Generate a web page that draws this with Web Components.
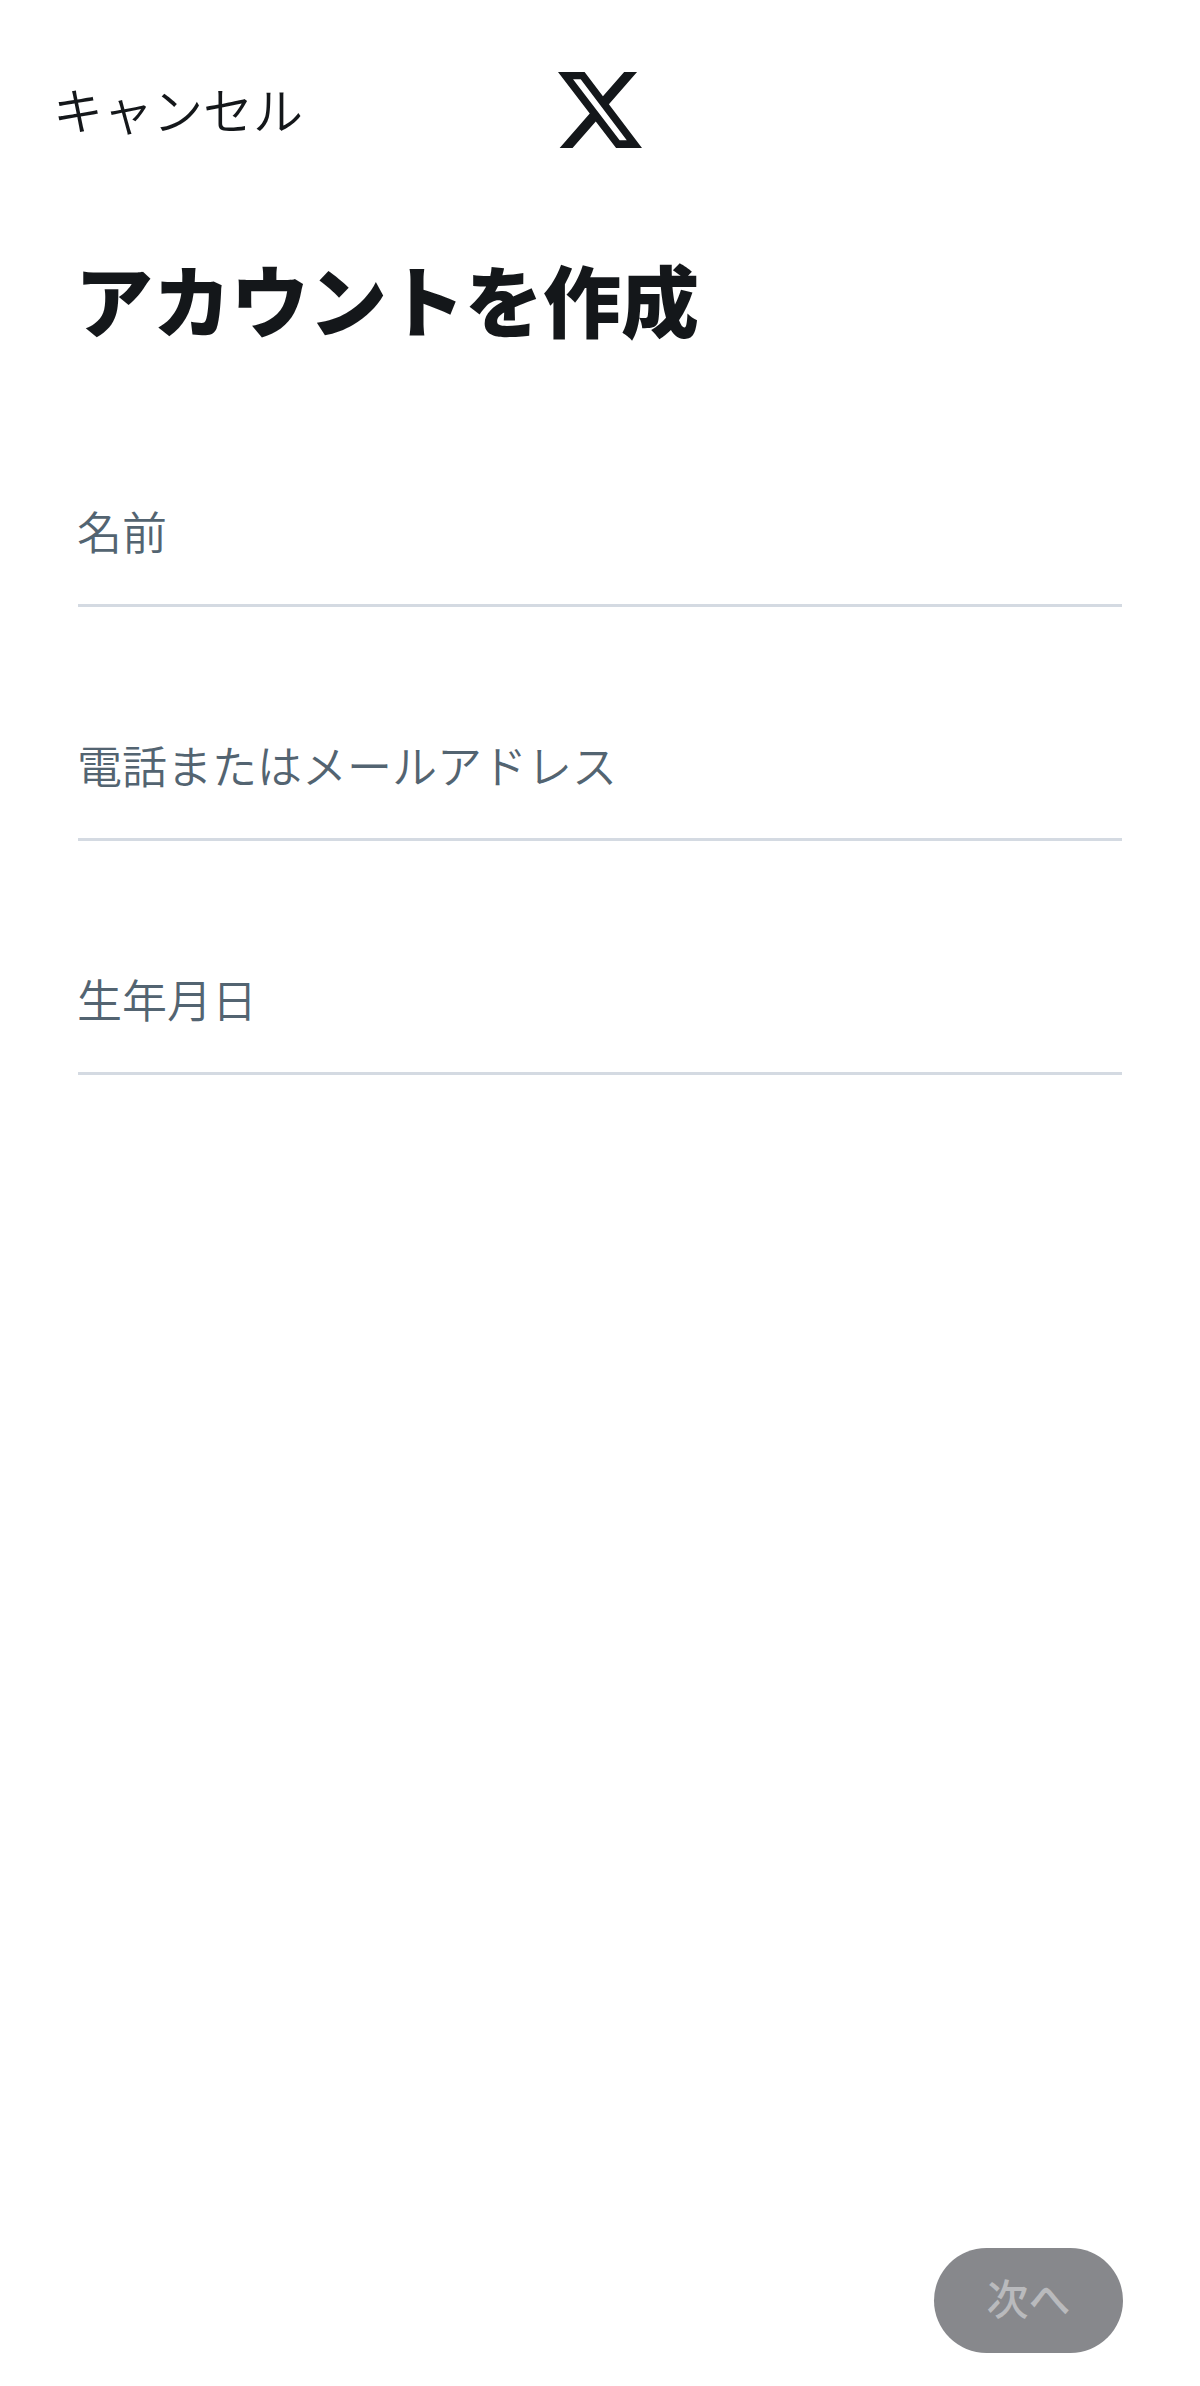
<!DOCTYPE html>
<html lang="ja">
<head>
<meta charset="utf-8">
<title>アカウントを作成</title>
<style>
  html, body { margin: 0; background: #fff; }
  body { font-family: "Noto Sans CJK JP", "Liberation Sans", sans-serif; }
</style>
</head>
<body>
<signup-page>
  <signup-topbar slot="top">キャンセル</signup-topbar>
  <h1 slot="title">アカウントを作成</h1>
  <signup-field>名前</signup-field>
  <signup-field>電話またはメールアドレス</signup-field>
  <signup-field>生年月日</signup-field>
  <next-button slot="action">次へ</next-button>
</signup-page>
<script>
class SignupPage extends HTMLElement {
    constructor() {
        super();
        this.attachShadow({mode: 'open'});
        this.shadowRoot.innerHTML = `
      <style>
    :host {
        display: flex;
        flex-direction: column;
        height: 2386px;
        box-sizing: border-box;
        padding-bottom: 33px;
        overflow: hidden;
    }
    .title {
        padding: 96px 78px 0 75px;
    }
    ::slotted(h1) {
        margin: 0;
        font-size: 78px;
        line-height: 100px;
        font-weight: 900;
        color: #14171a;
    }
    .fields {
        display: flex;
        flex-direction: column;
        padding: 25px 78px 0;
    }
    .action {
        margin-top: auto;
        display: flex;
        justify-content: flex-end;
        padding-right: 77px;
    }
      </style>
      <slot name="top"></slot>
      <div class="title"><slot name="title"></slot></div>
      <div class="fields"><slot></slot></div>
      <div class="action"><slot name="action"></slot></div>
  `;
    }
}

class SignupTopbar extends HTMLElement {
    constructor() {
        super();
        this.attachShadow({mode: 'open'});
        this.shadowRoot.innerHTML = `
      <style>
    :host {
        display: grid;
        grid-template-columns: 1fr auto 1fr;
        grid-template-rows: 80px;
        align-items: center;
        height: 152px;
        padding: 70px 53px 0;
        box-sizing: border-box;
        color: #14171a;
        font-size: 50px;
        font-weight: 350;
    }
    svg {
        display: block;
        width: 84px;
        height: 76px;
        fill: #14171a;
    }
    .cancel {
        align-self: start;
        line-height: 76px;
    }
      </style>
      <div class="cancel"><slot></slot></div>
      <svg viewBox="1.254 2.25 21.573 19.5" preserveAspectRatio="none"><path d="M18.244 2.25h3.308l-7.227 8.26 8.502 11.24H16.17l-5.214-6.817L4.99 21.75H1.68l7.73-8.835L1.254 2.25H8.08l4.713 6.231zm-1.161 17.52h1.833L7.084 4.126H5.117z"/></svg>
      <div></div>
  `;
    }
}

class SignupField extends HTMLElement {
    constructor() {
        super();
        this.attachShadow({mode: 'open'});
        this.shadowRoot.innerHTML = `
      <style>
    :host {
        display: block;
        height: 234px;
        box-sizing: border-box;
        padding-top: 126px;
    }
    .box {
        height: 108px;
        box-sizing: border-box;
        border-bottom: 3px solid #d4dae2;
        color: #536471;
        font-size: 45px;
        line-height: 64px;
        font-weight: 350;
        text-indent: -1px;
    }
      </style>
      <div class="box"><slot></slot></div>
  `;
    }
}

class NextButton extends HTMLElement {
    constructor() {
        super();
        this.attachShadow({mode: 'open'});
        this.shadowRoot.innerHTML = `
      <style>
    :host {
        display: flex;
        align-items: center;
        justify-content: center;
        box-sizing: border-box;
        width: 189px;
        height: 105px;
        padding-bottom: 8px;
        border-radius: 53px;
        background: #87888c;
        color: #b9babd;
        font-size: 42px;
        font-weight: 500;
    }
      </style>
      <slot></slot>
  `;
    }
}

customElements.define('signup-page', SignupPage);
customElements.define('signup-topbar', SignupTopbar);
customElements.define('signup-field', SignupField);
customElements.define('next-button', NextButton);
</script>
</body>
</html>
